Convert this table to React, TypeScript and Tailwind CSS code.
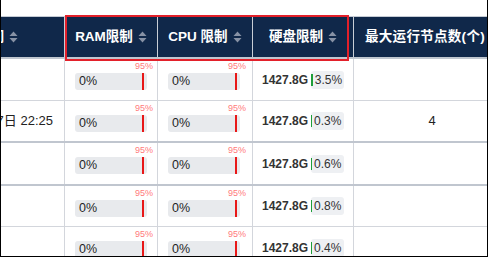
import React from "react";

type Row = {
  time?: string;
  disk: number;
  nodes?: string;
  divider: "thin" | "thick";
  h: string;
};

const rows: Row[] = [
  { disk: 3.5, divider: "thin", h: "h-[42px]" },
  { time: "2024年3月17日 22:25", disk: 0.3, nodes: "4", divider: "thick", h: "h-[42px]" },
  { disk: 0.6, divider: "thick", h: "h-[43px]" },
  { disk: 0.8, divider: "thin", h: "h-[41px]" },
  { disk: 0.4, divider: "thin", h: "h-[42px]" },
];

const font = { fontFamily: '"Liberation Sans", Arial, "Noto Sans CJK SC", sans-serif' };

function SortIcon() {
  return (
    <svg width="9" height="12" viewBox="0 0 9 12" className="ml-[5px] shrink-0">
      <path d="M4.5 0.5 L8.5 5 L0.5 5 Z" fill="#8792a5" />
      <path d="M4.5 11.5 L8.5 7 L0.5 7 Z" fill="#8792a5" />
    </svg>
  );
}

function HeadCell({ label, className }: { label: string; className: string }) {
  return (
    <div className={`flex shrink-0 items-center h-full border-r border-[#c9ced6] ${className}`}>
      <span className="text-white text-[13.5px] font-bold whitespace-nowrap">{label}</span>
      <SortIcon />
    </div>
  );
}

function LimitBar() {
  return (
    <div className="relative w-[72px] h-[17px] rounded-[3px] bg-[#e8eaed] flex items-center pl-[4px]">
      <span className="text-[12.5px] text-[#1f1f1f] leading-none">0%</span>
      <div className="absolute left-[67px] top-0 h-[17px] w-[1.5px] bg-[#e81818]" />
      <span className="absolute left-[60px] -top-[11px] text-[9px] leading-none text-[#ff7b7b]">95%</span>
    </div>
  );
}

function DiskUsage({ pct }: { pct: number }) {
  return (
    <div className="flex items-center gap-[3px]">
      <span className="text-[12px] font-bold text-[#333]">1427.8G</span>
      <div className="relative h-[18px] w-[33px] rounded-[3px] bg-[#eef0f3] flex items-center overflow-hidden">
        <div className="h-[12px] bg-[#1e9e3a] shrink-0" style={{ width: `${Math.max(1, pct * 0.5)}px` }} />
        <span className="ml-[2px] text-[12px] text-[#333] leading-none">{pct}%</span>
      </div>
    </div>
  );
}

export default function App() {
  return (
    <div
      className="w-[488px] h-[257px] overflow-hidden relative bg-white border-l border-r border-b border-black"
      style={font}
    >
      <div className="h-[16px]" />
      <div className="flex h-[43px] bg-[#10284a] border-t border-[#c5cbd4] border-b-2 border-b-[#bfc6cf]">
        <HeadCell label="更新时间" className="w-[64px] justify-end pr-[46px]" />
        <HeadCell label="RAM限制" className="w-[93px] justify-center" />
        <HeadCell label="CPU 限制" className="w-[95px] justify-center" />
        <HeadCell label="硬盘限制" className="w-[101px] justify-center" />
        <div className="w-[156px] shrink-0 flex items-center pl-[11px] h-full">
          <span className="text-white text-[13.5px] font-bold whitespace-nowrap tracking-[0.3px]">最大运行节点数(个)</span>
        </div>
      </div>
      {rows.map((r, i) => (
        <div
          key={i}
          className={`flex ${r.h} ${r.divider === "thick" ? "border-b-2 border-[#c0c6cf]" : "border-b border-[#d3d6dc]"}`}
        >
          <div className="w-[64px] shrink-0 flex items-center justify-end pr-[11px] border-r border-[#d3d6dc] overflow-hidden">
            {r.time && <span className="text-[13px] text-[#222] whitespace-nowrap">{r.time}</span>}
          </div>
          <div className="w-[93px] shrink-0 pl-[10px] pt-[14px] border-r border-[#d3d6dc]">
            <LimitBar />
          </div>
          <div className="w-[95px] shrink-0 pl-[10px] pt-[14px] border-r border-[#d3d6dc]">
            <LimitBar />
          </div>
          <div className="w-[101px] shrink-0 pl-[9px] flex items-center border-r border-[#d3d6dc]">
            <DiskUsage pct={r.disk} />
          </div>
          <div className="w-[156px] shrink-0 flex items-center justify-center">
            {r.nodes && <span className="text-[13px] text-[#222]">{r.nodes}</span>}
          </div>
        </div>
      ))}
      <div className="absolute left-[64px] top-[15px] w-[284px] h-[46px] border-2 border-[#e3202a] pointer-events-none" />
    </div>
  );
}
